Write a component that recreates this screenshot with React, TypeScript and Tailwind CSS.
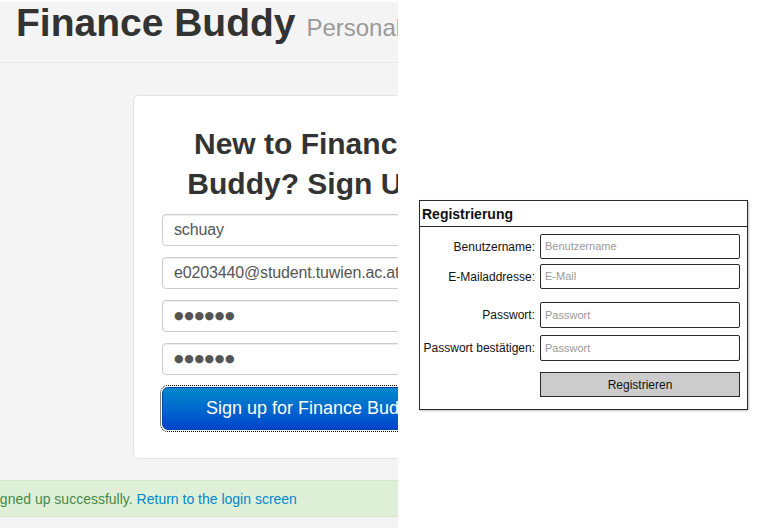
import React from "react";

const sans = "font-['Liberation_Sans',Arial,sans-serif]";

function FakeInput({ children, dots }: { children: React.ReactNode; dots?: boolean }) {
  return (
    <div className="h-[32px] rounded-[4px] border border-[#cccccc] bg-white pl-[11px] flex items-center overflow-hidden whitespace-nowrap shadow-[inset_0_1px_1px_rgba(0,0,0,0.075)]">
      {dots ? (
        <span className="font-['DejaVu_Sans',sans-serif] text-[11px] text-[#555555] tracking-[0.6px]">{children}</span>
      ) : (
        <span className="text-[16px] text-[#555555] tracking-[-0.15px]">{children}</span>
      )}
    </div>
  );
}

function SketchRow({ label, placeholder, className }: { label: string; placeholder: string; className?: string }) {
  return (
    <div className={`flex items-center ${className ?? ""}`}>
      <div className="w-[115px] text-right text-[12px] text-[#111] whitespace-nowrap">{label}</div>
      <div className="ml-[5px] w-[200px] h-full border-[1.5px] border-[#2a2a2a] rounded-[2px] flex items-center pl-[4px] text-[11px] text-[#9a9a9a]">
        {placeholder}
      </div>
    </div>
  );
}

export default function App() {
  return (
    <div className={`w-[760px] h-[531px] bg-white flex overflow-hidden ${sans}`}>
      {/* screenshot of the web app */}
      <div className="w-[398px] shrink-0 pt-[2px] overflow-hidden">
        <div className="h-[526px] bg-[#f4f4f4] overflow-hidden">
          <div className="h-[61px] border-b border-[#e6e6e6] pl-4 pt-[1px] whitespace-nowrap">
            <h1 className="text-[39px] leading-[40px] font-bold text-[#333333]">
              Finance Buddy{" "}
              <small className="text-[24px] font-normal text-[#999999]">Personal finance</small>
            </h1>
          </div>

          <div className="ml-[133px] mt-[32px] w-[364px] bg-white border border-[#e5e5e5] rounded-[5px] px-[28px] pt-[28px] pb-[28px]">
            <h2 className="text-[30px] leading-[40px] font-bold text-[#333333] text-center pr-[22px] mb-[10px]">
              New to Finance Buddy? Sign Up
            </h2>
            <div className="flex flex-col gap-[11px]">
              <FakeInput>schuay</FakeInput>
              <FakeInput>e0203440@student.tuwien.ac.at</FakeInput>
              <FakeInput dots>●●●●●●</FakeInput>
              <FakeInput dots>●●●●●●</FakeInput>
            </div>
            <button className="mt-[12px] w-full h-[43px] rounded-[6px] text-white text-[18px] bg-gradient-to-b from-[#0088cc] to-[#0044cc] border border-[#0044aa] outline-1 outline-dotted outline-black outline-offset-1 pr-[6px] whitespace-nowrap">
              Sign up for Finance Buddy
            </button>
          </div>

          <div className="mt-[21px] -ml-[87px] w-[600px] bg-[#dff0d8] border border-[#d6e9c6] pl-[14px] pt-2 pb-[7px] text-[14px] leading-[20px] text-[#468847] whitespace-nowrap">
            You have signed up successfully.{" "}
            <a className="text-[#0088cc]">Return to the login screen</a>
          </div>
        </div>
      </div>

      {/* sketch of the same form */}
      <div className="flex-1 pl-[21px] pt-[200px]">
        <div className="w-[329px] h-[210px] border-[1.5px] border-[#2a2a2a] bg-white shadow-[1px_1px_2px_rgba(0,0,0,0.25)]">
          <div className="h-[26px] border-b-[1.5px] border-[#2a2a2a] pl-[2px] pt-[3px] text-[14px] font-bold text-[#111]">
            Registrierung
          </div>
          <SketchRow className="mt-[7px] h-[25px]" label="Benutzername:" placeholder="Benutzername" />
          <SketchRow className="mt-[5px] h-[25px]" label="E-Mailaddresse:" placeholder="E-Mail" />
          <SketchRow className="mt-[13px] h-[26px]" label="Passwort:" placeholder="Passwort" />
          <SketchRow className="mt-[7px] h-[26px]" label="Passwort bestätigen:" placeholder="Passwort" />
          <div className="flex mt-[11px]">
            <div className="ml-[120px] w-[200px] h-[25px] border-[1.5px] border-[#2a2a2a] bg-[#cccccc] flex items-center justify-center text-[12px] text-[#111]">
              Registrieren
            </div>
          </div>
        </div>
      </div>
    </div>
  );
}
